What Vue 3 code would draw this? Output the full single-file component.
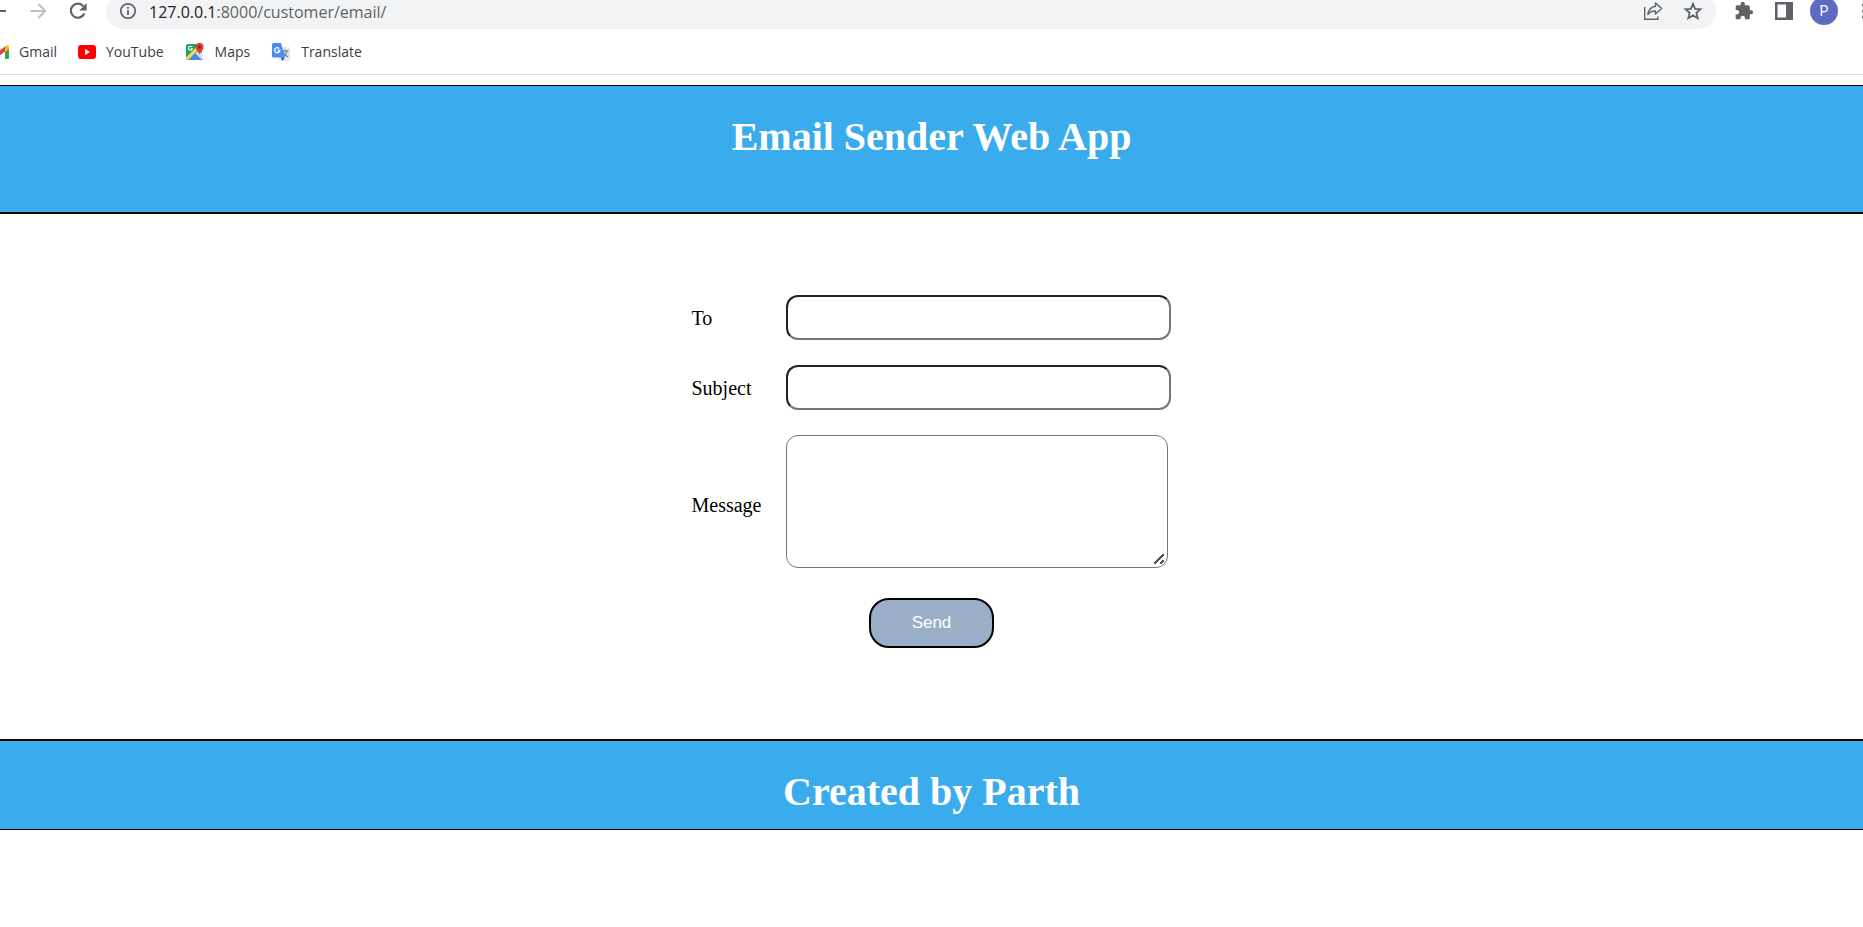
<script setup>
import { ref } from 'vue'

const to = ref('')
const subject = ref('')
const message = ref('')
</script>

<template>
  <div class="browser">
    <nav class="toolbar" aria-label="Browser toolbar">
      <button class="tool" aria-label="Back">
        <svg width="20" height="20" viewBox="0 0 20 20"><path d="M18 10H3M10 2.500L2.500 10L10 17.500" fill="none" stroke="#5f6368" stroke-width="2" /></svg>
      </button>
      <button class="tool" aria-label="Forward">
        <svg width="20" height="20" viewBox="0 0 20 20"><path d="M2.500 10H17M10.500 3L17.300 10L10.500 17" fill="none" stroke="#bdbfc2" stroke-width="2" /></svg>
      </button>
      <button class="tool" aria-label="Reload">
        <svg width="20" height="20" viewBox="0 0 20 20"><path d="M16.300 12.500A7 7 0 1 1 15.300 5.300" fill="none" stroke="#5f6368" stroke-width="2.200" /><path d="M18.700 2V9.400H11.300Z" fill="#5f6368" /></svg>
      </button>
      <div class="address">
        <svg width="18" height="18" viewBox="0 0 18 18"><circle cx="9" cy="9" r="7.200" fill="none" stroke="#5f6368" stroke-width="1.800" /><path d="M8.100 8H9.900V13H8.100ZM8.100 5H9.900V6.700H8.100Z" fill="#5f6368" /></svg>
        <span class="url"><span class="host">127.0.0.1</span>:8000/customer/email/</span>
        <button class="tool" aria-label="Share">
          <svg width="20" height="20" viewBox="0 0 20 20"><path d="M1.700 6V18.300H15V15.500" fill="none" stroke="#5f6368" stroke-width="1.400" /><path d="M12.500 2L18.700 7.500L12.500 13V10C8.500 9.800 6.500 11.300 4.800 13.500C5.500 9 8 6 12.500 5.300Z" fill="none" stroke="#5f6368" stroke-width="1.400" stroke-linejoin="round" /></svg>
        </button>
        <button class="tool" aria-label="Bookmark this page">
          <svg width="20" height="20" viewBox="0 0 20 20"><path d="M10 2.800L12.100 7.800L17.500 8.300L13.400 11.900L14.700 17.200L10 14.400L5.300 17.200L6.600 11.900L2.500 8.300L7.900 7.800Z" fill="none" stroke="#5f6368" stroke-width="1.800" /></svg>
        </button>
      </div>
      <button class="tool" aria-label="Extensions">
        <svg width="20" height="20" viewBox="0 0 24 24"><path d="M20.500 11H19V7c0-1.100-.9-2-2-2h-4V3.500a2.500 2.500 0 0 0-5 0V5H4c-1.100 0-1.990.9-1.990 2v3.800H3.500c1.490 0 2.700 1.210 2.700 2.700s-1.210 2.700-2.700 2.700H2V20c0 1.100.9 2 2 2h3.800v-1.500c0-1.490 1.210-2.700 2.700-2.700s2.700 1.210 2.700 2.700V22H17c1.100 0 2-.9 2-2v-4h1.500a2.500 2.500 0 0 0 0-5z" fill="#5f6368" /></svg>
      </button>
      <button class="tool" aria-label="Side panel">
        <svg width="18" height="18" viewBox="0 0 18 18"><path d="M0 0H18V18H0ZM2.500 2.500V15.500H11V2.500Z" fill="#5f6368" fill-rule="evenodd" /></svg>
      </button>
      <button class="tool avatar" aria-label="Profile">P</button>
      <button class="tool" aria-label="Menu">
        <svg width="4" height="18" viewBox="0 0 4 18"><circle cx="2" cy="3" r="2" fill="#5f6368" /><circle cx="2" cy="9" r="2" fill="#5f6368" /><circle cx="2" cy="15" r="2" fill="#5f6368" /></svg>
      </button>
    </nav>
    <nav class="bookmarks" aria-label="Bookmarks">
      <a class="bookmark" href="#">
        <svg width="18" height="14" viewBox="0 0 18 14"><path d="M0 2V12.500Q0 14 1.500 14H4V5.500Z" fill="#4285f4" /><path d="M14 5V14H16.500Q18 14 18 12.500V2.500Z" fill="#34a853" /><path d="M4 1.500L9 5.300L14 1.500V6.500L9 10.300L4 6.500Z" fill="#ea4335" /><path d="M14 1.500L15.300 .6Q18 -.5 18 2.500V4L14 7Z" fill="#fbbc04" /><path d="M4 1.500L2.700 .6Q0 -.5 0 2.500V4L4 7Z" fill="#c5221f" /></svg>
        Gmail
      </a>
      <a class="bookmark" href="#">
        <svg width="18" height="14" viewBox="0 0 18 14"><rect width="18" height="14" rx="3" fill="#f00" /><path d="M7 4L12 7L7 10Z" fill="#fff" /></svg>
        YouTube
      </a>
      <a class="bookmark" href="#">
        <svg width="20" height="20" viewBox="0 0 20 20"><rect x="1" y="2" width="16" height="16" rx="2" fill="#1fa463" /><path d="M2 17L10 9L18 17L17 18H3Z" fill="#4688f4" /><path d="M1 15.500L12 4.500L14 7L3 18Q1 18 1 15.500Z" fill="#ffd64a" /><path d="M10.500 11.500L17 18V11L14 8Z" fill="#dadce0" /><path d="M5 18L10 13L15 18Z" fill="#4688f4" /><path d="M14.500 13C14 9.500 10.500 8.500 10.500 5A4 4 0 0 1 18.500 5C18.500 8.500 15 9.500 14.500 13Z" fill="#e53c31" /><circle cx="14.500" cy="5" r="1.500" fill="#821c16" /><path d="M7 5A2 2 0 1 0 7.400 6.700H5.500" fill="none" stroke="#fff" stroke-width="1.100" /></svg>
        Maps
      </a>
      <a class="bookmark" href="#">
        <svg width="20" height="20" viewBox="0 0 20 20"><rect x="8" y="5" width="11" height="14" rx="1.500" fill="#e4e7eb" /><path d="M11 9H17.500M14 7.500V9M16 9C15.500 12 13.500 13.500 11.500 14.500M12.500 10.500C13.500 12.500 15 14 17 14.800" fill="none" stroke="#5f7890" stroke-width="1.100" /><path d="M2.500 1H10L14 15.500H2.500Q1 15.500 1 14V2.500Q1 1 2.500 1Z" fill="#4c8bf5" /><path d="M10 15.500H14L11.200 19Z" fill="#3a50b8" /><path d="M8.200 6.500A2.600 2.600 0 1 0 8.800 8.500H6.500" fill="none" stroke="#fff" stroke-width="1.300" /></svg>
        Translate
      </a>
    </nav>
  </div>

  <header class="banner banner-top">
    <h1>Email Sender Web App</h1>
  </header>

  <main>
    <form class="mail-form" @submit.prevent>
      <label for="to">To</label>
      <input id="to" v-model="to" type="text" />
      <label for="subject">Subject</label>
      <input id="subject" v-model="subject" type="text" />
      <label class="message-label" for="message">Message</label>
      <textarea id="message" v-model="message"></textarea>
      <button class="send" type="submit">Send</button>
    </form>
  </main>

  <footer class="banner banner-bottom">
    <h1>Created by Parth</h1>
  </footer>
</template>

<style>
body {
  margin: 0;
  background: #fff;
}
</style>

<style scoped>
.browser {
  overflow: hidden;
  margin-bottom: 10px;
  border-bottom: 1px solid #dadce0;
  font-family: "Open Sans", "Noto Sans", sans-serif;
}

.toolbar {
  display: flex;
  align-items: center;
  gap: 12px;
  height: 36px;
  margin: -7px -15px 0 -16px;
}

.tool {
  display: flex;
  flex: none;
  align-items: center;
  justify-content: center;
  width: 28px;
  height: 28px;
  padding: 0;
  border: 0;
  border-radius: 50%;
  background: none;
}

.avatar {
  background: #5c6bc0;
  color: #fff;
  font: 14px Roboto, sans-serif;
}

.address {
  display: flex;
  flex: 1;
  align-items: center;
  gap: 12px;
  box-sizing: border-box;
  height: 36px;
  margin: 0 2px;
  padding: 0 9px 0 13px;
  border-radius: 18px;
  background: #f1f3f4;
}

.url {
  flex: 1;
  padding-top: 2px;
  color: #5f6368;
  font-size: 16px;
  line-height: 24px;
}

.host {
  color: #202124;
}

.bookmarks {
  display: flex;
  align-items: center;
  gap: 21px;
  height: 45px;
  margin-left: -9px;
}

.bookmark {
  display: flex;
  align-items: center;
  gap: 10px;
  color: #3c4043;
  font-size: 14px;
  line-height: 20px;
  text-decoration: none;
}

.banner {
  box-sizing: border-box;
  padding: 28px 16px 0;
  border: solid #000;
  background: #3aabed;
  color: #fff;
  text-align: center;
}

.banner h1 {
  margin: 0;
  font: bold 40px/46px "Liberation Serif", serif;
}

.banner-top {
  padding-bottom: 52px;
  border-width: 1px 0 2px;
}

.banner-bottom {
  padding-bottom: 14px;
  border-width: 2px 0 1px;
}

.mail-form {
  display: grid;
  grid-template-columns: auto 385px;
  align-items: center;
  justify-content: center;
  gap: 25px;
  padding: 81px 16px 91px;
  font: 20px/24px "Liberation Serif", serif;
}

.message-label {
  padding-top: 6px;
}

.mail-form input,
.mail-form textarea {
  box-sizing: border-box;
  border-radius: 12px;
  background: #fff;
  font: 16px "Liberation Sans", sans-serif;
}

.mail-form input {
  height: 45px;
  padding: 0 10px;
  border: 2px solid;
  border-color: #212121 #767676 #767676 #212121;
}

.mail-form textarea {
  width: 382px;
  height: 133px;
  padding: 10px;
  border: 1px solid #767676;
  resize: both;
}

.mail-form textarea::-webkit-resizer {
  background:
    linear-gradient(135deg, transparent 42%, #505050 42% 58%, transparent 58%) 2px 2px / 10px 10px no-repeat,
    linear-gradient(135deg, transparent 36%, #505050 36% 64%, transparent 64%) 8px 8px / 4px 4px no-repeat;
}

.send {
  grid-column: 1 / -1;
  justify-self: center;
  width: 125px;
  height: 50px;
  margin-top: 5px;
  border: 2px solid #000;
  border-radius: 20px;
  background: #9aaec8;
  color: #fff;
  font: 17px "Liberation Sans", sans-serif;
}
</style>
